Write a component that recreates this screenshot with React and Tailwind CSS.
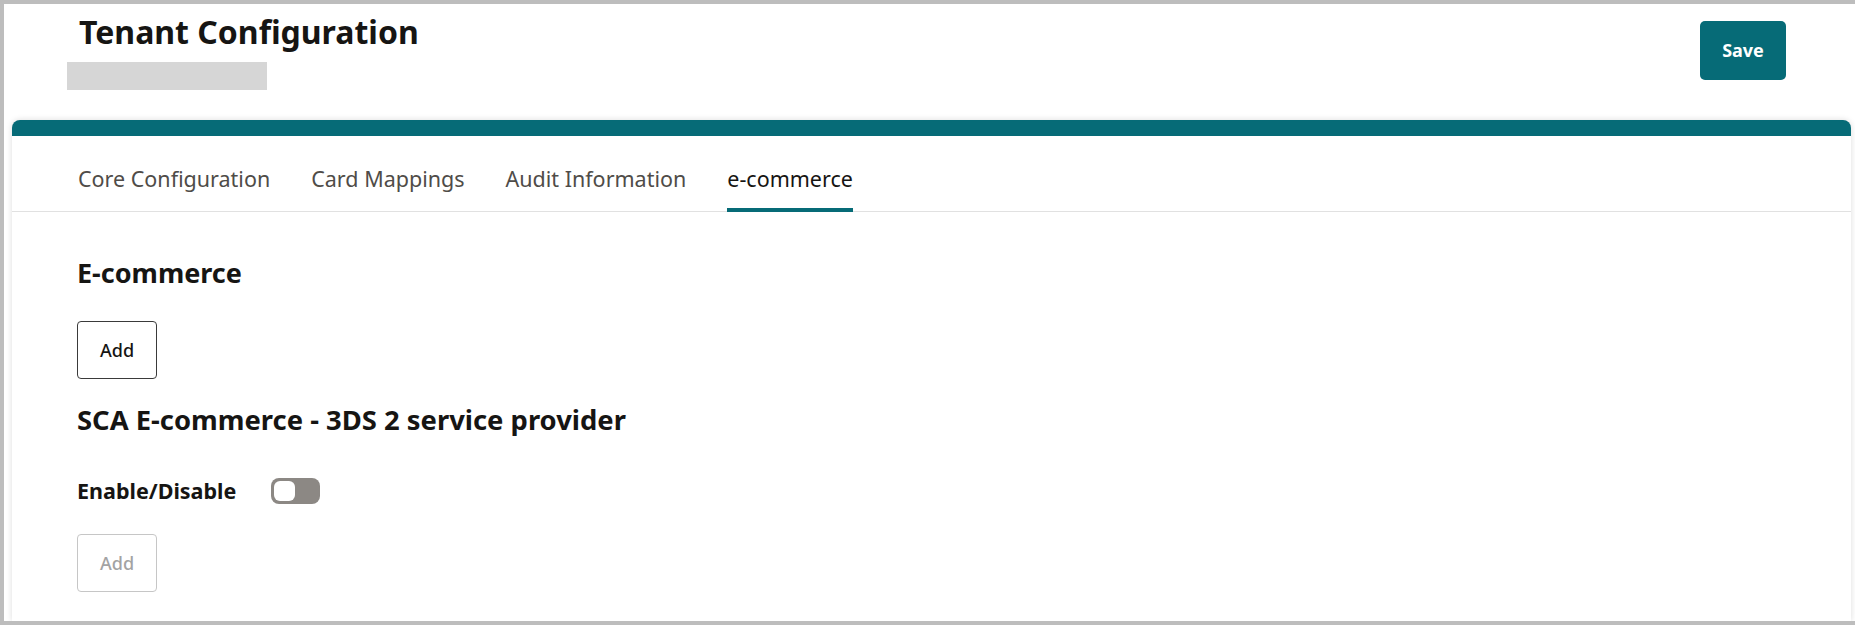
const tabs = ["Core Configuration", "Card Mappings", "Audit Information", "e-commerce"];

function Toggle() {
  return (
    <button type="button" className="flex h-[26px] w-[49px] items-center rounded-[8px] bg-[#8c8884] p-[3px]">
      <span className="block h-[20px] w-[21px] rounded-[6px] bg-white" />
    </button>
  );
}

export default function App() {
  return (
    <div className="flex h-[625px] w-full flex-col overflow-hidden border-t-4 border-b-4 border-l-4 border-[#bdbdbd] bg-white font-['Noto_Sans',sans-serif] text-[#161513]">
      {/* page header */}
      <div className="flex h-[116px] shrink-0 items-start justify-between pl-[63px] pr-[69px] pt-[9px]">
        <div>
          <h1 className="ml-3 text-[32px] leading-[38px] font-bold">Tenant Configuration</h1>
          <div className="mt-[11px] h-[28px] w-[200px] bg-[#d6d6d6]" />
        </div>
        <button type="button" className="mt-2 h-[59px] w-[86px] rounded-[5px] bg-[#066b77] text-[18px] font-bold text-white">
          Save
        </button>
      </div>

      {/* card */}
      <div className="ml-2 mr-1 flex-1 rounded-t-[8px] border-t-[16px] border-[#066b77] bg-white shadow-[0_0_6px_rgba(0,0,0,0.14)]">
        <div className="flex gap-[41px] border-b border-[#e1e1e1] pl-[66px]">
          {tabs.map((t) => {
            const active = t === "e-commerce";
            return (
              <div
                key={t}
                className={
                  active
                    ? "-mb-px border-b-4 border-[#066b77] pt-[29px] pb-[15px] text-[21.5px] leading-[28px] text-[#161513]"
                    : "-mb-px border-b-4 border-transparent pt-[29px] pb-[15px] text-[21.5px] leading-[28px] text-[#4f4c48]"
                }
              >
                {t}
              </div>
            );
          })}
        </div>

        <div className="pl-[65px] pt-[43px]">
          <h2 className="text-[27px] leading-[36px] font-bold">E-commerce</h2>
          <button type="button" className="mt-[30px] h-[58px] w-[80px] rounded-[4px] border border-[#3a3a3a] text-[18px] font-medium text-[#161513]">
            Add
          </button>
          <h2 className="mt-[23px] text-[27.4px] leading-[36px] font-bold">SCA E-commerce - 3DS 2 service provider</h2>
          <div className="mt-[39px] flex items-center">
            <span className="w-[194px] text-[21.5px] leading-[28px] font-bold">Enable/Disable</span>
            <Toggle />
          </div>
          <button type="button" className="mt-[29px] h-[58px] w-[80px] rounded-[4px] border border-[#c6c6c6] text-[18px] font-medium text-[#a3a3a3]">
            Add
          </button>
        </div>
      </div>
    </div>
  );
}
